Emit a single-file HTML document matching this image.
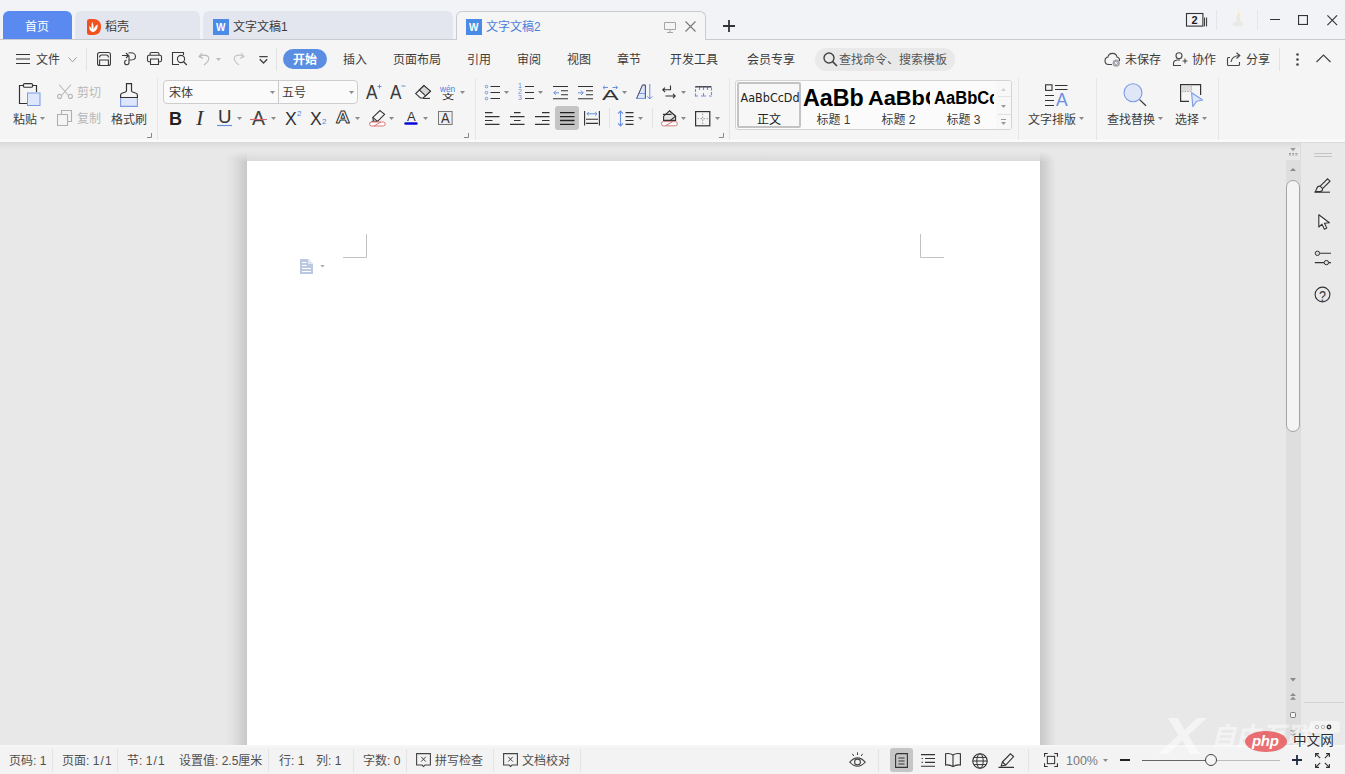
<!DOCTYPE html>
<html lang="zh-CN">
<head>
<meta charset="utf-8">
<title>文字文稿2 - WPS</title>
<style>
*{box-sizing:border-box;margin:0;padding:0}
html,body{width:1345px;height:774px;overflow:hidden;background:#e9e9e9}
body{font-family:"Liberation Sans","Noto Sans CJK SC",sans-serif;font-size:12px;color:#3c3c3c;position:relative}
.abs,.t{position:absolute}
.t{white-space:nowrap;line-height:16px;height:16px}
svg{position:absolute;overflow:visible}
#titlebar{position:absolute;left:0;top:0;width:1345px;height:40px;background:#f2f3f7;border-bottom:1px solid #c9cbd0}
.tab{position:absolute;top:11px;height:28px;background:#e3e6ee;border-radius:6px 6px 0 0}
#menubar{position:absolute;left:0;top:40px;width:1345px;height:36px;background:#f5f5f5}
#ribbon{position:absolute;left:0;top:76px;width:1345px;height:66px;background:linear-gradient(#f5f5f5 63px,#fafafa 64px)}
#doc{position:absolute;left:0;top:142px;width:1345px;height:604px;background:#e8e8e8}
#page{position:absolute;left:247px;top:161px;width:793px;height:590px;background:#fff;}
#status{position:absolute;left:0;top:745px;width:1345px;height:29px;background:linear-gradient(#f8f8f8,#f3f3f3 3px);padding-top:1px}
#status>*{margin-top:1px}
.st{color:#4f4f4f}
.sep{position:absolute;width:1px;background:#dcdcdc}
</style>
</head>
<body>
<div id="titlebar">
<div class="tab" style="left:3px;width:69px;background:#5a8af0"></div>
<div class="t" style="left:25px;top:19px;color:#fff">首页</div>
<div class="tab" style="left:75px;width:125px"></div>
<svg style="left:87px;top:19px" width="14" height="16" viewBox="0 0 14 16"><path d="M0 2.5Q0 0 2.5 0H7Q14 0.5 14 8Q14 15.5 7 16H2.5Q0 16 0 13.5Z" fill="#f2501c"/><path d="M6 13.2C3 12.5 2 10 2.3 7C3.5 8 4.4 9 4.8 10.3C4.3 7.5 4.4 5 5.2 2.8C6.3 5 6.8 7.5 6.6 10.5C7.4 8 8.6 6.4 10.6 5.4C10.9 9 9.5 12 6 13.2Z" fill="#fff"/></svg>
<div class="t" style="left:105px;top:19px">稻壳</div>
<div class="tab" style="left:203px;width:250px"></div>
<svg style="left:213px;top:19px" width="16" height="16" viewBox="0 0 16 16"><rect width="16" height="16" fill="#4a8be6"/></svg>
<div class="t" style="left:216.29px;top:22.05px;font-size:11.05px;line-height:11.05px;height:11.05px;color:#fff;font-family:'Liberation Sans',sans-serif;font-weight:bold;transform:scaleX(0.903);transform-origin:0 0;">W</div>
<div class="t" style="left:233px;top:19px">文字文稿1</div>
<div class="tab" style="left:456px;width:250px;background:#f5f5f5;border:1px solid #c9cbd0;border-bottom:none;height:29px"></div>
<svg style="left:466px;top:19px" width="16" height="16" viewBox="0 0 16 16"><rect width="16" height="16" fill="#4a8be6"/></svg>
<div class="t" style="left:469.29px;top:22.05px;font-size:11.05px;line-height:11.05px;height:11.05px;color:#fff;font-family:'Liberation Sans',sans-serif;font-weight:bold;transform:scaleX(0.903);transform-origin:0 0;">W</div>
<div class="t" style="left:486px;top:19px;color:#4a7fd8">文字文稿2</div>
<svg style="left:664px;top:22px" width="12" height="12" viewBox="0 0 12 12"><path d="M0.5 0.5H11.5V7.5H0.5ZM6 7.5V10.5M3 10.5H9" fill="none" stroke="#a6a6a6" stroke-width="1"/></svg>
<svg style="left:685px;top:21px" width="11" height="11" viewBox="0 0 11 11"><path d="M0.5 0.5L10.5 10.5M10.5 0.5L0.5 10.5" fill="none" stroke="#777" stroke-width="1.1"/></svg>
<svg style="left:723px;top:20px" width="12" height="12" viewBox="0 0 12 12"><path d="M6 0V12M0 6H12" fill="none" stroke="#333" stroke-width="1.8"/></svg>
<svg style="left:1186px;top:13px" width="22" height="14" viewBox="0 0 22 14"><rect x="0.5" y="0.5" width="16.4" height="12.6" fill="none" stroke="#333" stroke-width="1.1"/><path d="M18.6 4.5V13.4M20.6 4.5V13.4" stroke="#333" stroke-width="1"/></svg>
<div class="t" style="left:1186px;top:12px;width:17px;text-align:center;font-size:11px;font-weight:bold;color:#222;font-family:'Liberation Sans',sans-serif">2</div>
<div class="sep" style="left:1216px;top:10px;height:20px;background:#e4e5ea"></div>
<svg style="left:1228px;top:8px" width="20" height="22" viewBox="0 0 20 22"><circle cx="10" cy="11" r="10" fill="#f3f3f6"/><path d="M4.5 17.5Q5 14 9 13Q7.4 11 9.4 7Q10 3.4 11.4 6.4Q12 10 12.5 13Q15.6 14.5 15.6 17.5Q10 19.6 4.5 17.5Z" fill="#e9e9e6"/><path d="M9.8 8L10.6 2L11.6 8Z" fill="#efe9c0"/></svg>
<div class="sep" style="left:1257px;top:10px;height:20px;background:#e4e5ea"></div>
<svg style="left:1270px;top:19px" width="10" height="1"><path d="M0 0.5H10" stroke="#333" stroke-width="1"/></svg>
<svg style="left:1298px;top:15px" width="10" height="10" viewBox="0 0 10 10"><rect x="0.55" y="0.55" width="8.9" height="8.9" fill="none" stroke="#333" stroke-width="1.1"/></svg>
<svg style="left:1327px;top:14.5px" width="10.5" height="10.5" viewBox="0 0 10.5 10.5"><path d="M0.4 0.4L10.1 10.1M10.1 0.4L0.4 10.1" fill="none" stroke="#333" stroke-width="1.1"/></svg>
</div>
<div id="menubar">
<svg style="left:16px;top:14px" width="14" height="10" viewBox="0 0 14 10"><path d="M0 0.5H14M0 5H14M0 9.5H14" stroke="#333" stroke-width="1.1"/></svg>
<div class="t" style="left:36px;top:12px">文件</div>
<svg style="left:68px;top:17px" width="9" height="6" viewBox="0 0 9 6"><path d="M0.5 0.5L4.5 4.8L8.5 0.5" fill="none" stroke="#999" stroke-width="1"/></svg>
<div class="sep" style="background:#e2e2e2;left:86px;top:8px;height:23px"></div>
<!-- save -->
<svg style="left:97px;top:12px" width="14" height="14" viewBox="0 0 14 14"><rect x="0.55" y="0.55" width="12.9" height="12.9" rx="2" fill="none" stroke="#3a3a3a" stroke-width="1.1"/><path d="M2.6 5.4Q2.6 3 4.6 3H9.4Q11.4 3 11.4 5.4M2.6 13.2V8H11.4V13.2" fill="none" stroke="#3a3a3a" stroke-width="1.1"/></svg>
<!-- export pdf-like -->
<svg style="left:121px;top:12px" width="16" height="14" viewBox="0 0 16 14"><path d="M1 3.5H7M5 1L7.5 3.5L5 6M7.5 1Q14.5 0 14.5 4.5Q14.5 8.5 8 8M8 3.5V10.5A2.2 2.2 0 1 1 5.6 8.3" fill="none" stroke="#3a3a3a" stroke-width="1.1"/></svg>
<!-- print -->
<svg style="left:147px;top:12px" width="15" height="13" viewBox="0 0 15 14" preserveAspectRatio="none"><path d="M3 3.5V2Q3 0.5 4.5 0.5H10.5Q12 0.5 12 2V3.5M3 10.5H2Q0.5 10.5 0.5 9V5Q0.5 3.5 2 3.5H13Q14.5 3.5 14.5 5V9Q14.5 10.5 13 10.5H12M3.5 7.5H11.5V13.5H3.5Z" fill="none" stroke="#3a3a3a" stroke-width="1.1"/></svg>
<!-- preview -->
<svg style="left:172px;top:12px" width="16" height="14" viewBox="0 0 16 14"><path d="M7 12.5H0.5V0.5H11.5V3" fill="none" stroke="#3a3a3a" stroke-width="1.1"/><circle cx="9" cy="7" r="3.6" fill="none" stroke="#3a3a3a" stroke-width="1.1"/><path d="M11.6 9.8L14.8 13" stroke="#3a3a3a" stroke-width="1.3"/></svg>
<!-- undo -->
<svg style="left:198px;top:12px" width="14" height="14" viewBox="0 0 14 14"><path d="M4 1L1 4.5L5 6.5M1.5 4.5Q8 1.5 10.5 5Q12 8.5 6 13" fill="none" stroke="#b9b9b9" stroke-width="1.1"/></svg>
<svg style="left:216px;top:18px" width="5" height="3"><path d="M0 0H5L2.5 3Z" fill="#bcbcbc"/></svg>
<!-- redo -->
<svg style="left:231px;top:12px" width="14" height="14" viewBox="0 0 14 14"><path d="M10 1L13 4.5L9 6.5M12.5 4.5Q6 1.5 3.5 5Q2 8.5 8 13" fill="none" stroke="#c4c4c4" stroke-width="1.1"/></svg>
<svg style="left:259px;top:16px" width="9" height="8" viewBox="0 0 9 8"><path d="M0.3 0.6H8.7M0.8 3.2L4.5 7L8.2 3.2" fill="none" stroke="#444" stroke-width="1.4"/></svg>
<div class="sep" style="background:#e2e2e2;left:276px;top:8px;height:23px"></div>
<div class="abs" style="left:283px;top:9px;width:44px;height:20px;border-radius:10px;background:#5a8ee2"></div>
<div class="t" style="left:293px;top:12px;color:#fff;font-weight:bold">开始</div>
<div class="t" style="left:343px;top:12px">插入</div>
<div class="t" style="left:393px;top:12px">页面布局</div>
<div class="t" style="left:467px;top:12px">引用</div>
<div class="t" style="left:517px;top:12px">审阅</div>
<div class="t" style="left:567px;top:12px">视图</div>
<div class="t" style="left:617px;top:12px">章节</div>
<div class="t" style="left:670px;top:12px">开发工具</div>
<div class="t" style="left:747px;top:12px">会员专享</div>
<div class="abs" style="left:815px;top:7.5px;width:140px;height:23px;border-radius:11.5px;background:#e9e9e9"></div>
<svg style="left:823px;top:12px" width="15" height="15" viewBox="0 0 15 15"><circle cx="6" cy="6" r="5" fill="none" stroke="#444" stroke-width="1.4"/><path d="M9.6 9.6L14 14" stroke="#444" stroke-width="1.6"/></svg>
<div class="t" style="left:839px;top:12px;color:#555">查找命令、搜索模板</div>
<!-- cloud -->
<svg style="left:1104px;top:12px" width="17" height="15" viewBox="0 0 17 15"><path d="M8 12.5H4.5A3.8 3.8 0 0 1 4 5A4.6 4.6 0 0 1 13 5A3.6 3.6 0 0 1 15.5 9" fill="none" stroke="#444" stroke-width="1.1"/><circle cx="12.2" cy="11.2" r="3.6" fill="#a4a4ac"/><path d="M11 10L13.4 12.4M13.4 10L11 12.4" stroke="#fff" stroke-width="0.9"/></svg>
<div class="t" style="left:1125px;top:12px">未保存</div>
<svg style="left:1173px;top:12px" width="15" height="14" viewBox="0 0 15 14"><circle cx="6" cy="3.8" r="3" fill="none" stroke="#444" stroke-width="1.1"/><path d="M8 13.5H0.5V11.5Q0.5 8 5 8H7M12 6.5V11.5M9.5 9H14.5" fill="none" stroke="#444" stroke-width="1.1"/></svg>
<div class="t" style="left:1192px;top:12px">协作</div>
<svg style="left:1227px;top:12px" width="15" height="14" viewBox="0 0 15 14"><path d="M3 5.5H1.5Q0.5 5.5 0.5 6.5V12.5Q0.5 13.5 1.5 13.5H11.5Q12.5 13.5 12.5 12.5V10M4 10Q5 4 12 3.5M9.5 0.8L12.8 3.5L9.5 6.5" fill="none" stroke="#444" stroke-width="1.1"/></svg>
<div class="t" style="left:1246px;top:12px">分享</div>
<div class="sep" style="background:#e2e2e2;left:1279px;top:8px;height:23px"></div>
<svg style="left:1296px;top:13px" width="3" height="13"><circle cx="1.5" cy="1.5" r="1.3" fill="#444"/><circle cx="1.5" cy="6.5" r="1.3" fill="#444"/><circle cx="1.5" cy="11.5" r="1.3" fill="#444"/></svg>
<svg style="left:1316px;top:14px" width="15" height="9" viewBox="0 0 15 9"><path d="M0.5 8L7.5 1L14.5 8" fill="none" stroke="#444" stroke-width="1.2"/></svg>
</div>
<div id="ribbon">
<!-- paste -->
<svg style="left:19px;top:7px" width="22" height="24" viewBox="0 0 22 24"><path d="M8 20.5H0.5V2.5H17.5V9" fill="none" stroke="#333" stroke-width="1.2"/><rect x="4.5" y="0.6" width="9" height="3.6" rx="1" fill="#f5f5f5" stroke="#333" stroke-width="1.1"/><rect x="8.5" y="10" width="12.5" height="12.5" fill="#dde6fa" stroke="#7b9be6" stroke-width="1"/></svg>
<div class="t" style="left:13px;top:36px">粘贴</div>
<svg style="left:40px;top:41px" width="5" height="3"><path d="M0 0H5L2.5 3Z" fill="#8a8a8a"/></svg>
<!-- cut -->
<svg style="left:57px;top:8px" width="16" height="15" viewBox="0 0 16 15"><path d="M2 0.5L11.5 11.5M14 0.5L4.5 11.5" fill="none" stroke="#b8b8b8" stroke-width="1.1"/><circle cx="2.6" cy="12.4" r="2" fill="none" stroke="#b8b8b8" stroke-width="1.1"/><circle cx="13.4" cy="12.4" r="2" fill="none" stroke="#b8b8b8" stroke-width="1.1"/></svg>
<div class="t" style="left:77px;top:9px;color:#b8b8b8">剪切</div>
<svg style="left:57px;top:34px" width="15" height="16" viewBox="0 0 15 16"><path d="M4.5 4.5V0.5H14.5V11.5H10.5M0.5 4.5H10.5V15.5H0.5Z" fill="none" stroke="#b0b0b0" stroke-width="1.1"/></svg>
<div class="t" style="left:77px;top:35px;color:#b8b8b8">复制</div>
<!-- format painter -->
<svg style="left:120px;top:7px" width="18" height="24" viewBox="0 0 18 24"><path d="M0.6 14.5V23.4H17.4V14.5Z" fill="#dde6fa" stroke="#7b9be6" stroke-width="1.1"/><path d="M0.6 14.5V12Q0.6 10.5 2.5 10L5.5 9Q6.5 8.6 6.5 7.5V0.6H11.5V7.5Q11.5 8.6 12.5 9L15.5 10Q17.4 10.5 17.4 12V14.5Z" fill="#f5f5f5" stroke="#333" stroke-width="1.2"/></svg>
<div class="t" style="left:111px;top:36px">格式刷</div>
<svg style="left:147px;top:57px" width="5" height="5"><path d="M4.5 0V4.5H0" fill="none" stroke="#888" stroke-width="1"/></svg>
<div class="sep" style="left:157px;top:2px;height:62px;background:#e6e6e6"></div>
<!-- font boxes -->
<div class="abs" style="left:163px;top:4px;width:195px;height:24px;background:#fafafa;border:1px solid #cdcdcd;border-radius:4px"></div>
<div class="sep" style="left:278px;top:5px;height:22px;background:#c8c8c8"></div>
<div class="t" style="left:169px;top:9px">宋体</div>
<svg style="left:270px;top:15px" width="5" height="3"><path d="M0 0H5L2.5 3Z" fill="#8a8a8a"/></svg>
<div class="t" style="left:282px;top:9px">五号</div>
<svg style="left:349px;top:15px" width="5" height="3"><path d="M0 0H5L2.5 3Z" fill="#8a8a8a"/></svg>
<!-- A+ A- -->
<svg style="left:366px;top:8px" width="16" height="15" viewBox="0 0 16 15"><path d="M11.5 2.5H15.5M13.5 0.5V4.5" stroke="#6a8fe0" stroke-width="1"/></svg>
<svg style="left:390px;top:8px" width="16" height="15" viewBox="0 0 16 15"><path d="M11.5 2H15.5" stroke="#6a8fe0" stroke-width="1"/></svg>
<div class="t" style="left:366.27px;top:6.64px;font-size:19.91px;line-height:19.91px;height:19.91px;color:#3c3c3c;font-family:'Liberation Sans',sans-serif;transform:scaleX(0.863);transform-origin:0 0;">A</div>
<div class="t" style="left:390.27px;top:6.64px;font-size:19.91px;line-height:19.91px;height:19.91px;color:#3c3c3c;font-family:'Liberation Sans',sans-serif;transform:scaleX(0.863);transform-origin:0 0;">A</div>
<!-- eraser -->
<svg style="left:415px;top:9px" width="16" height="14" viewBox="0 0 16 14"><path d="M9 0.6L15.4 6.2L8.2 13H5.4L0.7 8.6Z" fill="#f5f5f5" stroke="#333" stroke-width="1.1"/><path d="M9 0.6L15.4 6.2L10.6 10.8L4.3 5Z" fill="#d6d6d6" stroke="#333" stroke-width="1.1"/><path d="M8 13.4H15" stroke="#333" stroke-width="1.1"/></svg>
<!-- wen -->
<div class="t" style="left:440px;top:7px;font-size:9px;color:#4f7fdc;line-height:12px;height:12px;transform:scaleX(0.92);transform-origin:0 0">wén</div>
<div class="t" style="left:441.9px;top:15.8px;font-size:7.4px;line-height:9.47px;height:9.47px;color:#222;transform:scaleX(1.64);transform-origin:0 0">文</div>
<svg style="left:460px;top:15px" width="5" height="3"><path d="M0 0H5L2.5 3Z" fill="#8a8a8a"/></svg>
<!-- B I U -->
<div class="t" style="left:169px;top:33px;font-size:18px;line-height:20px;height:20px;font-weight:bold;color:#222;font-family:'Liberation Sans',sans-serif">B</div>
<div class="t" style="left:196.39px;top:32.24px;font-size:20.16px;line-height:20.16px;height:20.16px;color:#333;font-family:'Liberation Serif',serif;font-style:italic;transform:scaleX(1.108);transform-origin:0 0;">I</div>
<svg style="left:217px;top:35px" width="15" height="16" viewBox="0 0 15 16"><path d="M0 14.5H15" stroke="#6a8fe0" stroke-width="1.2"/></svg>
<svg style="left:237px;top:41px" width="5" height="3"><path d="M0 0H5L2.5 3Z" fill="#8a8a8a"/></svg>
<div class="t" style="left:251.96px;top:32.20px;font-size:20.20px;line-height:20.20px;height:20.20px;color:#444;font-family:'Liberation Sans',sans-serif;transform:scaleX(0.970);transform-origin:0 0;">A</div>
<svg style="left:250px;top:34px" width="17" height="15" viewBox="0 0 17 15"><path d="M0 9.5H17" stroke="#e0636b" stroke-width="1.1"/></svg>
<svg style="left:271px;top:41px" width="5" height="3"><path d="M0 0H5L2.5 3Z" fill="#8a8a8a"/></svg>
<div class="t" style="left:284.60px;top:33.92px;font-size:18.17px;line-height:18.17px;height:18.17px;color:#333;font-family:'Liberation Sans',sans-serif;transform:scaleX(0.971);transform-origin:0 0;">X</div>
<div class="t" style="left:297px;top:33px;font-size:8px;line-height:9px;height:9px;color:#4f7fdc;font-family:'Liberation Sans',sans-serif">2</div>
<div class="t" style="left:309.60px;top:33.92px;font-size:18.17px;line-height:18.17px;height:18.17px;color:#333;font-family:'Liberation Sans',sans-serif;transform:scaleX(0.971);transform-origin:0 0;">X</div>
<div class="t" style="left:322px;top:41px;font-size:8px;line-height:9px;height:9px;color:#4f7fdc;font-family:'Liberation Sans',sans-serif">2</div>
<div class="t" style="left:217.76px;top:33.04px;font-size:17.44px;line-height:17.44px;height:17.44px;color:#333;font-family:'Liberation Sans',sans-serif;transform:scaleX(1.070);transform-origin:0 0;">U</div>
<!-- A outline -->
<svg style="left:334px;top:34px" width="17" height="16"><text x="1.5" y="13.2" font-family="'Liberation Sans',sans-serif" font-weight="bold" font-size="17.4" fill="#fdfdfd" stroke="#333" stroke-width="0.9" stroke-linejoin="round" transform="scale(1.126,1)">A</text></svg>
<svg style="left:355px;top:41px" width="5" height="3"><path d="M0 0H5L2.5 3Z" fill="#8a8a8a"/></svg>
<!-- highlighter -->
<svg style="left:369px;top:34px" width="17" height="17" viewBox="0 0 17 17"><path d="M11 0.6L15.6 4.4L8.5 11.4L4.4 11L3.8 7.4Z" fill="#f5f5f5" stroke="#333" stroke-width="1.1"/><path d="M3.8 7.4L8.5 11.4M4.4 11L2 12.6H6.6" fill="none" stroke="#333" stroke-width="1.1"/><rect x="0.6" y="12" width="15.6" height="4" rx="2" fill="#fff" stroke="#d77" stroke-width="1"/><path d="M5 16L12 12" stroke="#d77" stroke-width="1"/></svg>
<svg style="left:389px;top:41px" width="5" height="3"><path d="M0 0H5L2.5 3Z" fill="#8a8a8a"/></svg>
<!-- font color -->
<svg style="left:404px;top:35px" width="14" height="14" viewBox="0 0 14 14"><rect x="0.3" y="11.2" width="13.4" height="2.6" rx="1.3" fill="#0a0ad6"/></svg>
<svg style="left:423px;top:41px" width="5" height="3"><path d="M0 0H5L2.5 3Z" fill="#8a8a8a"/></svg>
<div class="t" style="left:406.67px;top:33.98px;font-size:13.37px;line-height:13.37px;height:13.37px;color:#333;font-family:'Liberation Sans',sans-serif;transform:scaleX(0.970);transform-origin:0 0;">A</div>
<!-- char border -->
<svg style="left:438px;top:35px" width="15" height="14" viewBox="0 0 15 14"><rect x="0.5" y="0.5" width="13.6" height="13" fill="#efefef" stroke="#777" stroke-width="1"/></svg>
<div class="t" style="left:440.97px;top:35.59px;font-size:13.95px;line-height:13.95px;height:13.95px;color:#333;font-family:'Liberation Sans',sans-serif;transform:scaleX(0.929);transform-origin:0 0;">A</div>
<svg style="left:464px;top:57px" width="5" height="5"><path d="M4.5 0V4.5H0" fill="none" stroke="#888" stroke-width="1"/></svg>
<div class="sep" style="left:475px;top:2px;height:62px;background:#e6e6e6"></div>

<!-- bullets -->
<svg style="left:484px;top:9px" width="17" height="15" viewBox="0 0 17 15"><path d="M6.5 1.5H16M6.5 7.5H16M6.5 13.5H16" stroke="#333" stroke-width="1.1"/><g fill="none" stroke="#6a8fe0" stroke-width="0.9"><circle cx="2.5" cy="1.6" r="1.3"/><circle cx="2.5" cy="7.6" r="1.3"/><circle cx="2.5" cy="13.6" r="1.3"/></g></svg>
<svg style="left:504px;top:15px" width="5" height="3"><path d="M0 0H5L2.5 3Z" fill="#8a8a8a"/></svg>
<!-- numbering -->
<svg style="left:518px;top:9px" width="17" height="15" viewBox="0 0 17 15"><path d="M7 1.5H16M7 7.5H16M7 13.5H16" stroke="#333" stroke-width="1.1"/></svg>
<div class="t" style="left:518px;top:7px;font-size:7px;line-height:6px;height:18px;color:#6a8fe0;font-family:'Liberation Sans',sans-serif;white-space:normal;width:5px">1 2 3</div>
<svg style="left:538px;top:15px" width="5" height="3"><path d="M0 0H5L2.5 3Z" fill="#8a8a8a"/></svg>
<!-- outdent -->
<svg style="left:553px;top:9px" width="15" height="15" viewBox="0 0 15 15"><path d="M0 1.5H15M8 5.8H15M8 9.8H15M0 13.8H15" stroke="#333" stroke-width="1.1"/><path d="M6 7.8H0.8M3 5.6L0.8 7.8L3 10" fill="none" stroke="#6a8fe0" stroke-width="1"/></svg>
<!-- indent -->
<svg style="left:578px;top:9px" width="15" height="15" viewBox="0 0 15 15"><path d="M0 1.5H15M8 5.8H15M8 9.8H15M0 13.8H15" stroke="#333" stroke-width="1.1"/><path d="M0 7.8H5.2M3 5.6L5.2 7.8L3 10" fill="none" stroke="#6a8fe0" stroke-width="1"/></svg>
<!-- char scale -->
<svg style="left:602px;top:9px" width="17" height="15" viewBox="0 0 17 15"><path d="M1 2.5H6M2.8 0.8L1 2.5L2.8 4.2M10.5 2.5H15.5M13.7 0.8L15.5 2.5L13.7 4.2" fill="none" stroke="#6a8fe0" stroke-width="1"/></svg>
<svg style="left:622px;top:15px" width="5" height="3"><path d="M0 0H5L2.5 3Z" fill="#8a8a8a"/></svg>
<div class="t" style="left:601.95px;top:11.70px;font-size:14.54px;line-height:14.54px;height:14.54px;color:#333;font-family:'Liberation Sans',sans-serif;transform:scaleX(1.722);transform-origin:0 0;">A</div>
<!-- sort -->
<svg style="left:636px;top:8px" width="17" height="16" viewBox="0 0 17 16"><path d="M0.6 14.5L6.5 1H9.4V14.5Z" fill="#dde6fa" stroke="#7b9be6" stroke-width="1"/><path d="M3.2 9.5H9.4" stroke="#7b9be6" stroke-width="1"/><path d="M6.5 1H9.4V14.5M6.5 1L0.6 14.5" fill="none" stroke="#555" stroke-width="1"/><path d="M13.8 0V15M11.4 12.4L13.8 15L16.2 12.4" fill="none" stroke="#6a8fe0" stroke-width="1"/></svg>
<!-- show marks -->
<svg style="left:662px;top:9px" width="14" height="15" viewBox="0 0 14 15"><path d="M8.5 0.5V4.8H1M3 2.6L0.8 4.8L3 7M3.5 11H13.2M11 8.8L13.2 11L11 13.2" fill="none" stroke="#333" stroke-width="1.1"/></svg>
<svg style="left:681px;top:15px" width="5" height="3"><path d="M0 0H5L2.5 3Z" fill="#8a8a8a"/></svg>
<!-- ruler -->
<svg style="left:695px;top:10px" width="17" height="11" viewBox="0 0 17 11"><path d="M0.5 10.5V0.8H16.5V10.5M4.5 1V4M8.5 1V4M12.5 1V4" fill="none" stroke="#6a8fe0" stroke-width="1.1" stroke-dasharray="3 1.4"/><path d="M0.5 0.8H16.5" stroke="#333" stroke-width="1.2"/><path d="M0.5 10H3M6 10H11M14 10H16.5M8.5 7V10" stroke="#6a8fe0" stroke-width="1"/></svg>
<!-- align row -->
<svg style="left:485px;top:36px" width="15" height="13" viewBox="0 0 15 13"><path d="M0 0.6H7.5M0 4.6H14.5M0 8.5H7.5M0 12.4H14.5" stroke="#333" stroke-width="1.1"/></svg>
<svg style="left:510px;top:36px" width="15" height="13" viewBox="0 0 15 13"><path d="M4 0.6H10.5M0 4.6H14.5M4 8.5H10.5M0 12.4H14.5" stroke="#333" stroke-width="1.1"/></svg>
<svg style="left:535px;top:36px" width="15" height="13" viewBox="0 0 15 13"><path d="M7 0.6H14.5M0 4.6H14.5M7 8.5H14.5M0 12.4H14.5" stroke="#333" stroke-width="1.1"/></svg>
<div class="abs" style="left:555px;top:30px;width:24px;height:24px;background:#c4c4c4;border-radius:3px"></div>
<svg style="left:560px;top:36px" width="15" height="13" viewBox="0 0 15 13"><path d="M0 0.6H14.5M0 4.6H14.5M0 8.5H14.5M0 12.4H14.5" stroke="#222" stroke-width="1.3"/></svg>
<!-- distributed -->
<svg style="left:584px;top:35px" width="16" height="15" viewBox="0 0 16 15"><path d="M0.6 0V14.5M15.4 0V14.5M2 8.2H14M2 12.4H14" stroke="#333" stroke-width="1.1"/><path d="M3 2.8H13M4.8 1L3 2.8L4.8 4.6M11.2 1L13 2.8L11.2 4.6" fill="none" stroke="#6a8fe0" stroke-width="1"/></svg>
<div class="sep" style="left:609px;top:32px;height:20px;background:#e2e2e2"></div>
<!-- line spacing -->
<svg style="left:617px;top:34px" width="17" height="17" viewBox="0 0 17 17"><path d="M3.5 1V16M1 3.6L3.5 1L6 3.6M1 13.4L3.5 16L6 13.4" fill="none" stroke="#6a8fe0" stroke-width="1.1"/><path d="M8.5 2.6H16.5M8.5 6.6H16.5M8.5 10.5H16.5M8.5 14.4H16.5" stroke="#333" stroke-width="1.1"/></svg>
<svg style="left:638px;top:41px" width="5" height="3"><path d="M0 0H5L2.5 3Z" fill="#8a8a8a"/></svg>
<div class="sep" style="left:652px;top:32px;height:20px;background:#e2e2e2"></div>
<!-- shading -->
<svg style="left:661px;top:34px" width="17" height="17" viewBox="0 0 17 17"><path d="M8.6 0.8L14.6 6.2V10.4H2.6V6.2Z" fill="#e4e4e4" stroke="#333" stroke-width="1.1"/><path d="M2 4.4H10.5M8.6 0.8L14.6 6.2L9.4 10.4" fill="none" stroke="#333" stroke-width="1.1"/><rect x="0.6" y="11.6" width="15.6" height="4.2" rx="1.6" fill="#fff" stroke="#d08080" stroke-width="1"/><path d="M4.5 15.6L11.5 11.8" stroke="#d08080" stroke-width="1"/></svg>
<svg style="left:681px;top:41px" width="5" height="3"><path d="M0 0H5L2.5 3Z" fill="#8a8a8a"/></svg>
<!-- borders -->
<svg style="left:695px;top:35px" width="16" height="16" viewBox="0 0 16 16"><rect x="0.6" y="0.6" width="14.2" height="14.2" fill="none" stroke="#333" stroke-width="1.2"/><path d="M7.7 2.5V13M2.5 7.7H13" stroke="#999" stroke-width="1" stroke-dasharray="1.6 1.4"/></svg>
<svg style="left:715px;top:41px" width="5" height="3"><path d="M0 0H5L2.5 3Z" fill="#8a8a8a"/></svg><svg style="left:719px;top:57px" width="5" height="5"><path d="M4.5 0V4.5H0" fill="none" stroke="#888" stroke-width="1"/></svg>
<div class="sep" style="left:729px;top:2px;height:62px;background:#e6e6e6"></div>

<div class="abs" style="left:735px;top:4px;width:277px;height:50px;background:#fbfbfb;border:1px solid #d4d4d4;border-radius:3px;overflow:hidden">
 <div class="abs" style="left:1px;top:1px;width:64px;height:46px;background:#f7f7f7;border:2px solid #c3c3c3;border-radius:2px"></div>
 <div class="t" style="left:0px;top:8.5px;width:66px;text-align:center;font-size:13px;color:#222;font-family:'DejaVu Sans','Liberation Sans',sans-serif;transform:scaleX(0.86);transform-origin:50% 50%">AaBbCcDd</div>
 <div class="t" style="left:1px;top:31px;width:64px;text-align:center;color:#222">正文</div>
 <div class="abs" style="left:65px;top:0;width:64px;height:31px;overflow:hidden"><div class="t" style="left:2px;top:3px;font-size:24px;line-height:28px;height:28px;font-weight:bold;color:#000;font-family:'Liberation Sans',sans-serif;transform:scaleX(0.97);transform-origin:0 0">AaBb</div></div>
 <div class="t" style="left:65px;top:31px;width:65px;text-align:center">标题 1</div>
 <div class="abs" style="left:130px;top:0;width:63.5px;height:31px;overflow:hidden"><div class="t" style="left:2px;top:5px;font-size:20px;line-height:24px;height:24px;font-weight:bold;color:#000;font-family:'Liberation Sans',sans-serif;transform:scaleX(1.09);transform-origin:0 0">AaBbCc</div></div>
 <div class="t" style="left:130px;top:31px;width:65px;text-align:center">标题 2</div>
 <div class="abs" style="left:195px;top:0;width:63px;height:31px;overflow:hidden"><div class="t" style="left:3px;top:6px;font-size:18px;line-height:22px;height:22px;font-weight:bold;color:#000;font-family:'Liberation Sans',sans-serif;transform:scaleX(0.92);transform-origin:0 0">AaBbCcD</div></div>
 <div class="t" style="left:195px;top:31px;width:65px;text-align:center">标题 3</div>
 <div class="abs" style="left:260px;top:0;width:16px;height:48px;background:#f8f8f8"></div>
 <div class="abs" style="left:262px;top:15px;width:13px;height:1px;background:#e4e4e4"></div>
 <div class="abs" style="left:262px;top:33px;width:13px;height:1px;background:#e0e0e0"></div>
 <svg style="left:265px;top:7px" width="5" height="3"><path d="M0 3H5L2.5 0Z" fill="#d2d2d2"/></svg>
 <svg style="left:265px;top:24px" width="5" height="3"><path d="M0 0H5L2.5 3Z" fill="#9a9a9a"/></svg>
 <svg style="left:265px;top:38px" width="5" height="7"><path d="M0 0.5H5" stroke="#9a9a9a" stroke-width="1"/><path d="M0 3H5L2.5 6Z" fill="#9a9a9a"/></svg>
</div>
<div class="sep" style="left:1018px;top:2px;height:62px;background:#e6e6e6"></div>
<!-- text layout -->
<svg style="left:1045px;top:8px" width="23" height="23" viewBox="0 0 23 23"><rect x="0.6" y="0.8" width="6.4" height="5.6" fill="none" stroke="#333" stroke-width="1.1"/><path d="M10 1.5H22.5M10 5.5H22.5M0 11.5H9M0 16.5H9M0 21.5H9" stroke="#333" stroke-width="1.1"/></svg>
<div class="t" style="left:1055.97px;top:14.80px;font-size:18.90px;line-height:18.90px;height:18.90px;color:#6a8fe0;font-family:'Liberation Sans',sans-serif;transform:scaleX(0.926);transform-origin:0 0;">A</div>
<div class="t" style="left:1028px;top:36px">文字排版</div>
<svg style="left:1079px;top:41px" width="5" height="3"><path d="M0 0H5L2.5 3Z" fill="#8a8a8a"/></svg>
<div class="sep" style="left:1096px;top:2px;height:62px;background:#e6e6e6"></div>
<!-- find -->
<svg style="left:1123px;top:7px" width="24" height="24" viewBox="0 0 24 24"><circle cx="10" cy="9.8" r="9" fill="#dfe6f6" stroke="#7b9be6" stroke-width="1.1"/><path d="M16.6 16.6L23 22.8" stroke="#333" stroke-width="1.2"/></svg>
<div class="t" style="left:1107px;top:36px">查找替换</div>
<svg style="left:1158px;top:41px" width="5" height="3"><path d="M0 0H5L2.5 3Z" fill="#8a8a8a"/></svg>
<!-- select -->
<svg style="left:1180px;top:8px" width="24" height="24" viewBox="0 0 24 24"><rect x="2" y="2" width="9.5" height="5.5" fill="#dcdcdc"/><path d="M2 7.6H11.6M11.6 2V7.6" stroke="#aaa" stroke-width="1" stroke-dasharray="1.4 1.2"/><path d="M9 17.4H0.6V0.6H20.6V11" fill="none" stroke="#333" stroke-width="1.2"/><path d="M11.6 8.8L22.6 16L16.6 17.2L12.8 22.6Z" fill="#dde6fa" stroke="#7b9be6" stroke-width="1.1" stroke-linejoin="round"/></svg>
<div class="t" style="left:1175px;top:36px">选择</div>
<svg style="left:1202px;top:41px" width="5" height="3"><path d="M0 0H5L2.5 3Z" fill="#8a8a8a"/></svg>
<div class="sep" style="left:1218px;top:2px;height:62px;background:#e6e6e6"></div>


</div>
<div id="doc">
<div class="abs" style="left:0;top:0;width:1345px;height:7px;background:linear-gradient(#d9d9d9,#e8e8e8)"></div>
</div>
<div class="abs" style="left:225px;top:161px;width:22px;height:590px;background:linear-gradient(to right,#e8e8e8 0%,#e3e3e3 30%,#dadada 55%,#cfcfcf 80%,#c8c8c8 100%)"></div>
<div class="abs" style="left:1040px;top:161px;width:16px;height:590px;background:linear-gradient(to right,#c8c8c8 0%,#d3d3d3 35%,#dedede 65%,#e8e8e8 100%)"></div>
<div class="abs" style="left:247px;top:151px;width:793px;height:10px;background:linear-gradient(#e8e8e8,#dbdbdb)"></div>
<div class="abs" style="left:225px;top:151px;width:22px;height:10px;background:radial-gradient(ellipse 22px 10px at 100% 100%,#d0d0d0,#e8e8e8 100%)"></div>
<div class="abs" style="left:1040px;top:151px;width:16px;height:10px;background:radial-gradient(ellipse 16px 10px at 0% 100%,#d0d0d0,#e8e8e8 100%)"></div>
<div id="page">
<svg style="left:96px;top:73px" width="24" height="24"><path d="M23.5 0V23.5H0" fill="none" stroke="#c2c2c2" stroke-width="1"/></svg>
<svg style="left:673px;top:73px" width="24" height="24"><path d="M0.5 0V23.5H24" fill="none" stroke="#c2c2c2" stroke-width="1"/></svg>
<svg style="left:53px;top:98px" width="13" height="15" viewBox="0 0 13 15"><path d="M0 0H8L13 5V15H0Z" fill="#bac8e2"/><path d="M8 0V5H13Z" fill="#dfe6f3"/><path d="M2 3.5H6.5M2 6.5H6.5M2 9.5H11M2 12.5H11" stroke="#fff" stroke-width="1.2"/></svg>
<svg style="left:73px;top:104px" width="5" height="3"><path d="M0.3 0H4.7L2.5 2.6Z" fill="#a8a8a8"/></svg>
</div>
<!-- scrollbar -->
<div class="abs" style="left:1286px;top:160px;width:14px;height:586px;background:#dedede"></div>
<svg style="left:1289px;top:148px" width="9" height="8" viewBox="0 0 9 8"><path d="M1.2 0H6.8L4 3.2Z" fill="#9a9a9a"/><path d="M0 5.5H2M3.2 5.5H5.2M6.4 5.5H8.4M0 7H2M3.2 7H5.2M6.4 7H8.4" stroke="#9a9a9a" stroke-width="1"/></svg>
<svg style="left:1290px;top:168px" width="6" height="3"><path d="M0 3H6L3 0Z" fill="#8a8a8a"/></svg>
<div class="abs" style="left:1286px;top:180px;width:14px;height:252px;background:#f4f4f4;border:1px solid #a4a4a4;border-radius:7px"></div>
<svg style="left:1290px;top:678px" width="6" height="4"><path d="M0 0H6L3 3.6Z" fill="#8a8a8a"/></svg>
<svg style="left:1290px;top:693px" width="6" height="7"><path d="M0 3H6L3 0ZM0 6.8H6L3 3.8Z" fill="#8a8a8a"/></svg>
<svg style="left:1290px;top:712px" width="6" height="6"><rect x="0.5" y="0.5" width="5" height="5" rx="1" fill="#f4f4f4" stroke="#777" stroke-width="1"/></svg>
<svg style="left:1290px;top:730px" width="6" height="7"><path d="M0 0H6L3 3ZM0 3.8H6L3 6.8Z" fill="#8a8a8a"/></svg>
<!-- sidebar -->
<div class="abs" style="left:1300px;top:143px;width:45px;height:603px;background:#e9e9e9;border-left:1px solid #dcdcdc"></div>
<svg style="left:1314px;top:153px" width="18" height="4"><path d="M0 0.5H18M0 3.5H18" stroke="#c4c4c4" stroke-width="1"/></svg>
<svg style="left:1314px;top:178px" width="17" height="15" viewBox="0 0 17 15"><path d="M6.2 8.2L13.6 0.8L16 3.2L8.6 10.6M6.2 8.2Q3.4 7.8 2.8 10.6L1.4 13.6H5.6Q8.8 13.4 8.6 10.6M6.2 8.2L8.6 10.6" fill="none" stroke="#333" stroke-width="1.1"/><path d="M0.5 14.2H16" stroke="#333" stroke-width="1.1"/></svg>
<svg style="left:1318px;top:214px" width="13" height="16" viewBox="0 0 13 16"><path d="M0.8 0.8V13L4 10.2L6.4 15.2L8.8 14L6.4 9.2L11.4 8.8Z" fill="#f4f4f4" stroke="#333" stroke-width="1.1" stroke-linejoin="round"/></svg>
<svg style="left:1314px;top:250px" width="18" height="16" viewBox="0 0 18 16"><path d="M5.6 3.3H17M0.8 12.6H10M14.6 12.6H17" stroke="#333" stroke-width="1.1"/><circle cx="3.4" cy="3.3" r="2.2" fill="#dcdcdc" stroke="#333" stroke-width="1"/><circle cx="12.4" cy="12.6" r="2.2" fill="#dcdcdc" stroke="#333" stroke-width="1"/></svg>
<svg style="left:1314px;top:286px" width="17" height="17" viewBox="0 0 17 17"><circle cx="8.5" cy="8.5" r="7.4" fill="none" stroke="#333" stroke-width="1.1"/></svg>
<div class="t" style="left:1319.09px;top:288.52px;font-size:14.04px;line-height:14.04px;height:14.04px;color:#333;font-family:'Liberation Sans',sans-serif;transform:scaleX(0.894);transform-origin:0 0;">?</div>
<div class="abs" style="left:1304px;top:702px;width:40px;height:1px;background:#d2d2d2"></div>
<!--STATUS-->

<div id="status">
<div class="t st" style="left:9px;top:7px">页码: 1</div>
<div class="sep" style="left:52px;top:3px;height:23px;background:#e4e4e4"></div>
<div class="t st" style="left:62px;top:7px">页面: 1<span style="padding:0 1.2px">/</span>1</div>
<div class="sep" style="left:117px;top:3px;height:23px;background:#e4e4e4"></div>
<div class="t st" style="left:127px;top:7px">节: 1<span style="padding:0 1.2px">/</span>1</div>
<div class="t st" style="left:179px;top:7px">设置值: 2.5厘米</div>
<div class="sep" style="left:268px;top:3px;height:23px;background:#e4e4e4"></div>
<div class="t st" style="left:279px;top:7px">行: 1</div>
<div class="t st" style="left:316px;top:7px">列: 1</div>
<div class="sep" style="left:353px;top:3px;height:23px;background:#e4e4e4"></div>
<div class="t st" style="left:363px;top:7px">字数: 0</div>
<div class="sep" style="left:406px;top:3px;height:23px;background:#e4e4e4"></div>
<svg style="left:416px;top:7px" width="15" height="14" viewBox="0 0 15 14"><path d="M0.6 0.6H14.4V12H9L7.5 13.4L6 12H0.6Z" fill="none" stroke="#444" stroke-width="1.1"/><path d="M5.2 3.8L9.8 8.6M9.8 3.8L5.2 8.6" stroke="#444" stroke-width="1"/></svg>
<div class="t st" style="left:435px;top:7px">拼写检查</div>
<div class="sep" style="left:493px;top:3px;height:23px;background:#e4e4e4"></div>
<svg style="left:503px;top:7px" width="15" height="14" viewBox="0 0 15 14"><path d="M0.6 0.6H14.4V12H9L7.5 13.4L6 12H0.6Z" fill="none" stroke="#444" stroke-width="1.1"/><path d="M5.2 3.8L9.8 8.6M9.8 3.8L5.2 8.6" stroke="#444" stroke-width="1"/></svg>
<div class="t st" style="left:522px;top:7px">文档校对</div>
<div class="sep" style="left:580px;top:3px;height:23px;background:#e4e4e4"></div>
<!-- eye -->
<svg style="left:849px;top:6px" width="17" height="16" viewBox="0 0 17 16"><path d="M0.8 10.2Q8.5 1.6 16.2 10.2Q8.5 18.4 0.8 10.2Z" fill="none" stroke="#444" stroke-width="1.1"/><circle cx="8.5" cy="10" r="2.9" fill="none" stroke="#444" stroke-width="1.1"/><path d="M8.5 0.4V3M3.4 1.8L4.8 4M13.6 1.8L12.2 4" stroke="#444" stroke-width="1"/></svg>
<div class="sep" style="left:878px;top:3px;height:23px;background:#e4e4e4"></div>
<div class="abs" style="left:890px;top:2px;width:23px;height:24px;background:#c6c6c6;border-radius:3px"></div>
<svg style="left:895px;top:7px" width="13" height="15" viewBox="0 0 13 15"><path d="M2 0.6H12.4V14.4H0.6V2Z" fill="none" stroke="#333" stroke-width="1.1"/><path d="M3.4 5H9.6M3.4 8H9.6M3.4 11H9.6" stroke="#333" stroke-width="1"/></svg>
<svg style="left:921px;top:8px" width="14" height="13" viewBox="0 0 14 13"><path d="M0 0.6H14M4 4.5H14M4 8.4H14M0 12.3H14" stroke="#333" stroke-width="1.1"/><path d="M0.6 4.5H1.8M0.6 8.4H1.8" stroke="#333" stroke-width="1.1"/></svg>
<svg style="left:945px;top:7px" width="16" height="15" viewBox="0 0 16 15"><path d="M8 2Q5 0 0.6 0.8V12Q5 11.4 8 13.6Q11 11.4 15.4 12V0.8Q11 0 8 2ZM8 2V13.6" fill="none" stroke="#333" stroke-width="1.1"/></svg>
<svg style="left:972px;top:7px" width="16" height="16" viewBox="0 0 16 16"><circle cx="8" cy="8" r="7.2" fill="none" stroke="#333" stroke-width="1.1"/><ellipse cx="8" cy="8" rx="3.2" ry="7.2" fill="none" stroke="#333" stroke-width="1"/><path d="M0.8 8H15.2M1.8 4.4H14.2M1.8 11.6H14.2" stroke="#333" stroke-width="1"/></svg>
<svg style="left:998px;top:7px" width="17" height="15" viewBox="0 0 17 15"><path d="M4.4 9L12.4 0.8L15.6 3.6L7.8 12L3.2 13Z" fill="none" stroke="#333" stroke-width="1.1"/><path d="M4.4 9L7.8 12M0.5 14.4H16" stroke="#333" stroke-width="1.1"/></svg>
<div class="sep" style="left:1028px;top:3px;height:23px;background:#e4e4e4"></div>
<svg style="left:1044px;top:6.5px" width="14" height="14" viewBox="0 0 15 15"><path d="M0.6 4V0.6H4M11 0.6H14.4V4M14.4 11V14.4H11M4 14.4H0.6V11" fill="none" stroke="#333" stroke-width="1.2"/><rect x="3.6" y="3.6" width="7.8" height="7.8" fill="none" stroke="#333" stroke-width="1.1"/></svg>
<div class="t" style="left:1066px;top:7px;color:#7a7a7a;font-size:12.5px">100%</div>
<svg style="left:1103px;top:13px" width="5" height="3"><path d="M0 0H5L2.5 3Z" fill="#8a8a8a"/></svg>
<div class="abs" style="left:1120px;top:13px;width:10px;height:2px;background:#222"></div>
<div class="abs" style="left:1142px;top:14px;width:64px;height:1px;background:#666"></div>
<div class="abs" style="left:1216px;top:14px;width:64px;height:1px;background:#bdbdbd"></div>
<div class="abs" style="left:1205px;top:8px;width:12px;height:12px;border-radius:6px;border:1px solid #444;background:#f6f6f6"></div>
<svg style="left:1292px;top:9px" width="10" height="10" viewBox="0 0 10 10"><path d="M5 0V10M0 5H10" stroke="#1f2a44" stroke-width="1.8"/></svg>
<svg style="left:1315px;top:7px" width="15" height="15" viewBox="0 0 15 15"><path d="M0.6 0.6L5.2 5.2M0.6 4V0.6H4M14.4 0.6L9.8 5.2M11 0.6H14.4V4M0.6 14.4L5.2 9.8M0.6 11V14.4H4M14.4 14.4L9.8 9.8M14.4 11V14.4H11" fill="none" stroke="#333" stroke-width="1.1"/></svg>
</div>
<!-- watermark -->
<div class="abs" style="left:1310px;top:721px;width:30px;height:12px;background:rgba(255,255,255,.45);border-radius:3px"></div>
<svg style="left:1314px;top:724px" width="18" height="6" viewBox="0 0 18 6"><circle cx="3" cy="3" r="1.7" fill="none" stroke="#b0b0b0" stroke-width="0.9"/><circle cx="9" cy="3" r="1.7" fill="none" stroke="#b0b0b0" stroke-width="0.9"/><circle cx="15" cy="3" r="1.7" fill="#fff" stroke="#333" stroke-width="1.4"/></svg>
<div class="t" style="left:1160.95px;top:709.51px;font-size:52.33px;line-height:52.33px;height:52.33px;color:rgba(255,255,255,.5);font-family:'Liberation Sans',sans-serif;font-weight:bold;font-style:italic;transform:scaleX(1.228);transform-origin:0 0;">X</div>
<svg style="left:1155px;top:712px" width="160" height="46" viewBox="0 0 160 46" opacity="0.5"><text x="56" y="33" font-size="25" font-weight="bold" font-style="italic" fill="#fff" font-family="'Liberation Sans','Noto Sans CJK SC',sans-serif">自由互联</text></svg>
<div class="abs" style="left:1245px;top:731px;width:42px;height:21px;border-radius:50%;background:rgba(230,60,64,.72)"></div>
<div class="t" style="left:1252px;top:731px;color:#fff;font-size:15px;font-style:italic;font-weight:bold;line-height:19px;height:19px;font-family:'Liberation Sans',sans-serif;letter-spacing:-0.3px">php</div>
<div class="t" style="left:1293px;top:731px;font-size:13.6px;line-height:20px;height:20px;color:#2e2e2e;text-shadow:0 0 2px #fff">中文网</div>

</body>
</html>
